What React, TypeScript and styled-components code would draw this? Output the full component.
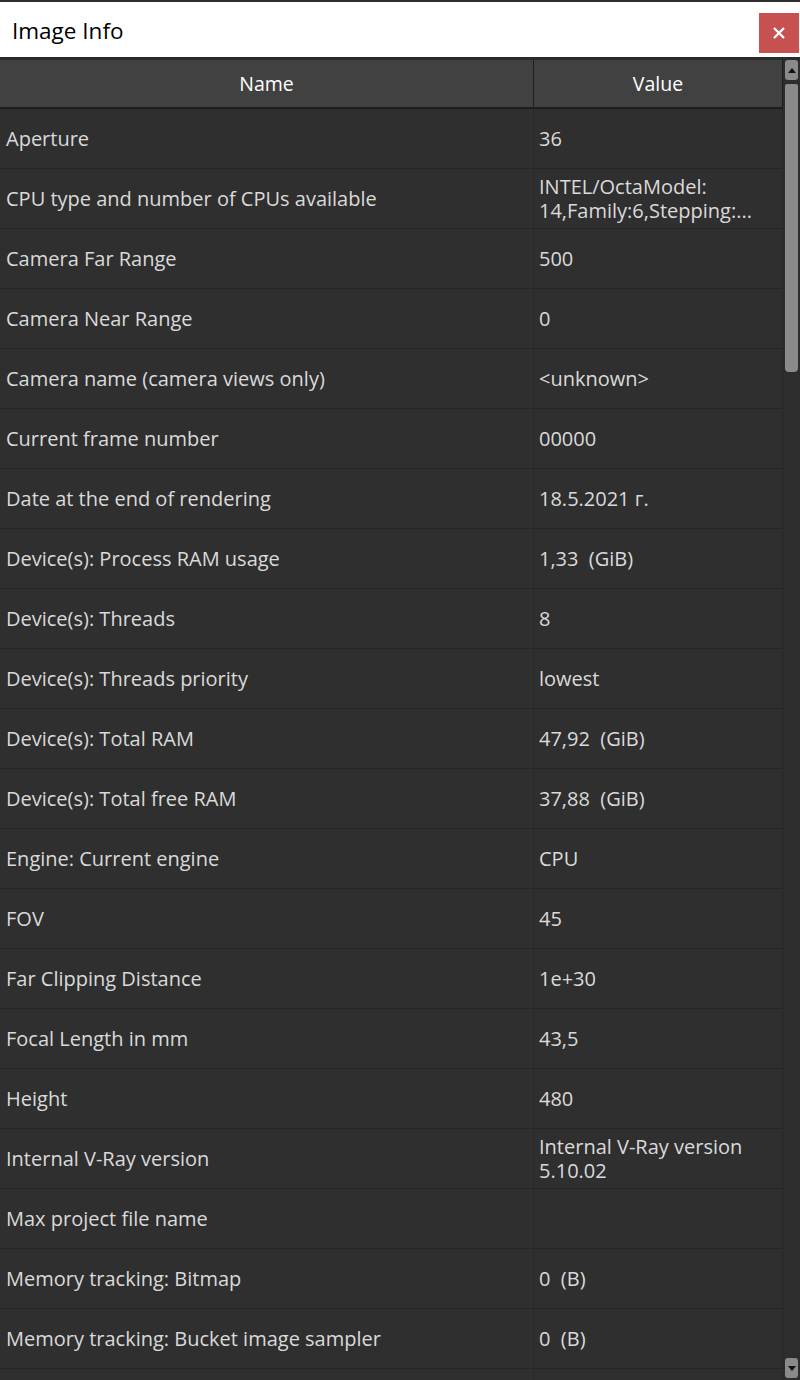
import React from "react";
import styled, { createGlobalStyle } from "styled-components";

const GlobalStyle = createGlobalStyle`
  html, body {
    margin: 0;
    padding: 0;
    background: #2d2d2d;
  }
  * { box-sizing: border-box; }
`;

const rows: [string, string][] = [
  ["Aperture", "36"],
  ["CPU type and number of CPUs available", "INTEL/OctaModel: 14,Family:6,Stepping:..."],
  ["Camera Far Range", "500"],
  ["Camera Near Range", "0"],
  ["Camera name (camera views only)", "<unknown>"],
  ["Current frame number", "00000"],
  ["Date at the end of rendering", "18.5.2021 г."],
  ["Device(s): Process RAM usage", "1,33  (GiB)"],
  ["Device(s): Threads", "8"],
  ["Device(s): Threads priority", "lowest"],
  ["Device(s): Total RAM", "47,92  (GiB)"],
  ["Device(s): Total free RAM", "37,88  (GiB)"],
  ["Engine: Current engine", "CPU"],
  ["FOV", "45"],
  ["Far Clipping Distance", "1e+30"],
  ["Focal Length in mm", "43,5"],
  ["Height", "480"],
  ["Internal V-Ray version", "Internal V-Ray version 5.10.02"],
  ["Max project file name", ""],
  ["Memory tracking: Bitmap", "0  (B)"],
  ["Memory tracking: Bucket image sampler", "0  (B)"],
];

export default function App() {
  return (
    <>
      <GlobalStyle />
      <Window>
        <TitleBar>
          <Title>Image Info</Title>
          <CloseButton>
            <svg width="14" height="14" viewBox="0 0 14 14">
              <path d="M2 2 L12 12 M12 2 L2 12" stroke="#fff" strokeWidth="2.4" />
            </svg>
          </CloseButton>
        </TitleBar>
        <Body>
          <Table>
            <HeaderRow>
              <HeaderCell $w={534}>Name</HeaderCell>
              <HeaderCell $w={248} $last>Value</HeaderCell>
            </HeaderRow>
            {rows.map(([name, value], i) => (
              <Row key={i}>
                <NameCell>{name}</NameCell>
                <ValueCell>{value}</ValueCell>
              </Row>
            ))}
            <Row>
              <NameCell />
              <ValueCell />
            </Row>
          </Table>
          <ScrollBar>
            <ArrowButton>
              <svg width="8" height="5" viewBox="0 0 8 5">
                <path d="M0 5 L4 0 L8 5 Z" fill="#111" />
              </svg>
            </ArrowButton>
            <Track>
              <Thumb />
            </Track>
            <ArrowButton>
              <svg width="8" height="5" viewBox="0 0 8 5">
                <path d="M0 0 L8 0 L4 5 Z" fill="#111" />
              </svg>
            </ArrowButton>
          </ScrollBar>
        </Body>
      </Window>
    </>
  );
}

const Window = styled.div`
  width: 800px;
  height: 1380px;
  display: flex;
  flex-direction: column;
  background: #2d2d2d;
  border-top: 2px solid #2d2d2d;
  overflow: hidden;
  font-family: "Open Sans", "Noto Sans", sans-serif;
`;

const TitleBar = styled.div`
  height: 58px;
  flex: none;
  background: #ffffff;
  display: flex;
  align-items: flex-start;
  justify-content: space-between;
  padding: 11px 1px 0 12px;
  border-bottom: 3px solid #2b2b2b;
`;

const Title = styled.div`
  font-size: 22.5px;
  line-height: 36px;
  color: #000;
`;

const CloseButton = styled.div`
  width: 40px;
  height: 40px;
  background: #c75050;
  display: flex;
  align-items: center;
  justify-content: center;
`;

const Body = styled.div`
  flex: 1;
  min-height: 0;
  display: flex;
`;

const Table = styled.div`
  width: 783px;
  flex: none;
  display: flex;
  flex-direction: column;
  overflow: hidden;
  background: #2f2f2f;
`;

const HeaderRow = styled.div`
  height: 49px;
  flex: none;
  display: flex;
  background: #414141;
  border-bottom: 2px solid #1e1e1e;
  border-right: 1px solid #1e1e1e;
`;

const HeaderCell = styled.div<{ $w: number; $last?: boolean }>`
  width: ${(p) => p.$w}px;
  flex: ${(p) => (p.$last ? 1 : "none")};
  display: flex;
  align-items: center;
  justify-content: center;
  color: #ffffff;
  font-size: 19.5px;
  border-right: ${(p) => (p.$last ? "none" : "1px solid #1e1e1e")};
`;

const Row = styled.div`
  height: 60px;
  flex: none;
  display: flex;
  background: #2f2f2f;
  border-bottom: 1px solid #262626;
`;

const NameCell = styled.div`
  width: 534px;
  flex: none;
  display: flex;
  align-items: center;
  padding-left: 6px;
  color: #dadada;
  font-size: 20px;
  border-right: 1px solid #2a2a2a;
`;

const ValueCell = styled.div`
  flex: 1;
  display: flex;
  align-items: center;
  padding: 0 16px 0 5px;
  color: #dadada;
  font-size: 20px;
  line-height: 24px;
  white-space: pre-wrap;
  border-right: 1px solid #262626;
`;

const ScrollBar = styled.div`
  width: 17px;
  flex: none;
  display: flex;
  flex-direction: column;
  padding: 0 2px 2px 2px;
  gap: 4px;
  background: #2d2d2d;
`;

const ArrowButton = styled.div`
  height: 20px;
  flex: none;
  background: #8a8a8a;
  border-radius: 3px;
  display: flex;
  align-items: center;
  justify-content: center;
`;

const Track = styled.div`
  flex: 1;
  display: flex;
  flex-direction: column;
`;

const Thumb = styled.div`
  height: 288px;
  background: #8a8a8a;
  border-radius: 2px 2px 4px 4px;
`;
